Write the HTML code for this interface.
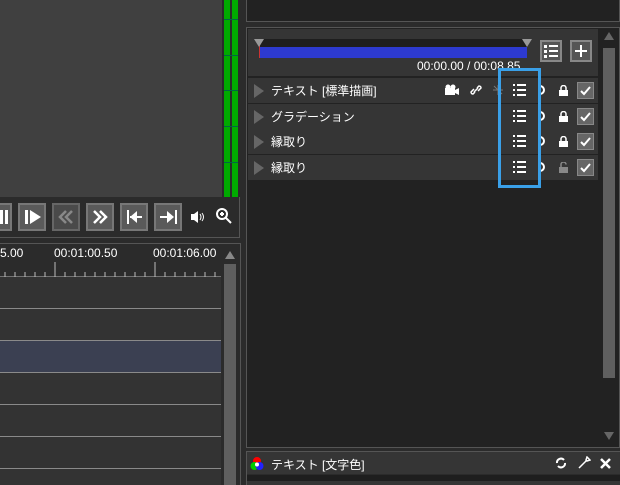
<!DOCTYPE html>
<html><head><meta charset="utf-8"><style>
*{margin:0;padding:0;box-sizing:border-box}
body{width:620px;height:485px;background:#2b2b2b;position:relative;overflow:hidden;font-family:"Liberation Sans","Noto Sans CJK JP",sans-serif;color:#fff}
.a{position:absolute}
.btn{position:absolute;top:203px;width:28px;height:28px;background:#5a5a5a;border:2px solid #777}
.row{position:absolute;left:248px;width:350px;height:25px;background:#353535}
.row .tri{position:absolute;left:6px;top:6px;width:0;height:0;border-left:10px solid #666;border-top:7px solid transparent;border-bottom:7px solid transparent}
.row .t{position:absolute;left:23px;top:4px;font-size:12px;color:#fff}
.li{position:absolute;left:265px;top:6px;width:13px;height:12px}
.chk{position:absolute;left:329px;top:4px;width:17px;height:17px;background:#666;border:1px solid #888}
.lk{position:absolute;left:311px;top:7px;width:9px;height:11px}
.tl{position:absolute;left:0;width:221px;height:1px;background:#8a8a8a}
</style></head><body>
<div class="a" style="left:0;top:0;width:222px;height:197px;background:#404040"></div>
<div class="a" style="left:222px;top:0;width:18px;height:198px;background:#2a2a2a"></div>
<div class="a" style="left:224px;top:0;width:6px;height:197px;background:#0a0"></div>
<div class="a" style="left:232px;top:0;width:6px;height:197px;background:#0a0"></div>
<div class="a" style="left:224px;top:19px;width:14px;height:1px;background:#064"></div>
<div class="a" style="left:224px;top:55px;width:14px;height:1px;background:#064"></div>
<div class="a" style="left:224px;top:90px;width:14px;height:1px;background:#064"></div>
<div class="a" style="left:224px;top:126px;width:14px;height:1px;background:#064"></div>
<div class="a" style="left:224px;top:162px;width:14px;height:1px;background:#064"></div>
<div class="a" style="left:0;top:197px;width:240px;height:41px;background:#2b2b2b;border-right:1px solid #555;border-bottom:1px solid #555"></div>
<div class="btn" style="left:-16px"><div class="a" style="left:14px;top:5px;width:3px;height:14px;background:#fff"></div><div class="a" style="left:19px;top:5px;width:3px;height:14px;background:#fff"></div></div>
<div class="btn" style="left:18px"><div class="a" style="left:5px;top:5px;width:3px;height:14px;background:#fff"></div><div class="a" style="left:10px;top:5px;border-left:11px solid #fff;border-top:7px solid transparent;border-bottom:7px solid transparent"></div></div>
<div class="btn" style="left:52px;background:#4a4a4a;border-color:#666"><svg class="a" style="left:3px;top:3px" width="18" height="18"><path d="M9 3L3 9l6 6M15 3L9 9l6 6" stroke="#888" stroke-width="2.5" fill="none"/></svg></div>
<div class="btn" style="left:86px"><svg class="a" style="left:3px;top:3px" width="18" height="18"><path d="M3 3l6 6-6 6M9 3l6 6-6 6" stroke="#fff" stroke-width="2.5" fill="none"/></svg></div>
<div class="btn" style="left:120px"><div class="a" style="left:5px;top:5px;width:2px;height:14px;background:#fff"></div><div class="a" style="left:8px;top:11px;width:12px;height:2px;background:#fff"></div><div class="a" style="left:8px;top:6px;border-right:7px solid #fff;border-top:6px solid transparent;border-bottom:6px solid transparent"></div></div>
<div class="btn" style="left:154px"><div class="a" style="left:19px;top:5px;width:2px;height:14px;background:#fff"></div><div class="a" style="left:4px;top:11px;width:12px;height:2px;background:#fff"></div><div class="a" style="left:11px;top:6px;border-left:7px solid #fff;border-top:6px solid transparent;border-bottom:6px solid transparent"></div></div>
<svg class="a" style="left:190px;top:209px" width="16" height="16"><path d="M1 5h3l4-3v12l-4-3H1z" fill="#fff"/><path d="M10 5q2 3 0 6M12 4q3 4 0 8" stroke="#fff" fill="none"/></svg>
<svg class="a" style="left:215px;top:207px" width="18" height="18"><circle cx="7" cy="7" r="5" stroke="#fff" stroke-width="2" fill="none"/><path d="M11 11l5 5M5 7h4M7 5v4" stroke="#fff" stroke-width="2"/></svg>
<div class="a" style="left:0;top:243px;width:241px;height:242px;background:#2b2b2b;border-right:1px solid #555;border-top:1px solid #555"></div>
<div class="a" style="left:0;top:246px;font-size:12px;color:#fff">5.00</div>
<div class="a" style="left:54px;top:246px;font-size:12px;color:#fff">00:01:00.50</div>
<div class="a" style="left:153px;top:246px;font-size:12px;color:#fff">00:01:06.00</div>
<svg class="a" style="left:0;top:262px" width="222" height="16"><g stroke="#bbb"><path d="M0 15h221"/><path d="M5 10v5M15 10v5M25 10v5M35 10v5M45 10v5M55 0v15M65 10v5M75 10v5M85 10v5M95 10v5M105 10v5M115 10v5M125 10v5M135 10v5M145 10v5M155 0v15M165 10v5M175 10v5M185 10v5M195 10v5M205 10v5M215 10v5"/></g></svg>
<div class="a" style="left:0;top:277px;width:221px;height:208px;background:#333"></div>
<div class="a" style="left:0;top:341px;width:221px;height:31px;background:#3b4052"></div>
<div class="tl" style="top:308px"></div><div class="tl" style="top:340px"></div><div class="tl" style="top:372px"></div><div class="tl" style="top:404px"></div><div class="tl" style="top:436px"></div><div class="tl" style="top:468px"></div>
<div class="a" style="left:224px;top:264px;width:12px;height:221px;background:#5f5f5f"></div>
<div class="a" style="left:225px;top:251px;border-bottom:8px solid #888;border-left:5px solid transparent;border-right:5px solid transparent"></div>
<div class="a" style="left:246px;top:-1px;width:374px;height:23px;background:#222;border:1px solid #555"></div>
<div class="a" style="left:246px;top:27px;width:374px;height:421px;background:#222;border:1px solid #555"></div>
<div class="a" style="left:248px;top:29px;width:350px;height:47px;background:#353535"></div>
<div class="a" style="left:259px;top:39px;width:268px;height:8px;background:#1e1e1e"></div>
<div class="a" style="left:259px;top:47px;width:268px;height:11px;background:#2d3acf"></div>
<div class="a" style="left:259px;top:44px;width:1px;height:14px;background:#c33"></div>
<div class="a" style="left:254px;top:39px;border-top:8px solid #999;border-left:5px solid transparent;border-right:5px solid transparent"></div>
<div class="a" style="left:522px;top:39px;border-top:8px solid #999;border-left:5px solid transparent;border-right:5px solid transparent"></div>
<div class="a" style="left:417px;top:59px;font-size:12px;color:#fff">00:00.00 / 00:08.85</div>
<div class="a" style="left:540px;top:40px;width:22px;height:22px;background:#555;border:2px solid #888"><svg width="18" height="18" style="position:absolute;left:0;top:0"><g fill="#fff"><rect x="2" y="3" width="3" height="3"/><rect x="7" y="3" width="9" height="2"/><rect x="2" y="8" width="3" height="3"/><rect x="7" y="8" width="9" height="2"/><rect x="2" y="13" width="3" height="3"/><rect x="7" y="13" width="9" height="2"/></g></svg></div>
<div class="a" style="left:570px;top:40px;width:22px;height:22px;background:#555;border:2px solid #888"><div class="a" style="left:3px;top:8px;width:12px;height:2px;background:#fff"></div><div class="a" style="left:8px;top:3px;width:2px;height:12px;background:#fff"></div></div>
<div class="a" style="left:603px;top:48px;width:12px;height:330px;background:#5f5f5f"></div>
<div class="a" style="left:604px;top:32px;border-bottom:8px solid #666;border-left:5px solid transparent;border-right:5px solid transparent"></div>
<div class="a" style="left:604px;top:432px;border-top:8px solid #666;border-left:5px solid transparent;border-right:5px solid transparent"></div>

<div class="row" style="top:78px"><div class="tri"></div><div class="t">テキスト [標準描画]</div>
<svg class="a" style="left:197px;top:6px" width="14" height="12"><rect x="0" y="4" width="10" height="7" fill="#fff"/><circle cx="3" cy="3" r="2.5" fill="#fff"/><circle cx="8" cy="3" r="2.5" fill="#fff"/><path d="M10 6l4-2v7l-4-2z" fill="#fff"/></svg>
<svg class="a" style="left:222px;top:6px" width="12" height="12"><path d="M5 8l-2 2a2 2 0 0 1-2-2l3-3M7 4l2-2a2 2 0 0 1 2 2l-3 3M4 8l4-4" stroke="#fff" stroke-width="1.5" fill="none"/></svg>
<svg class="a" style="left:244px;top:6px" width="12" height="12"><path d="M2 2l8 8M6 1v10M1 6h10" stroke="#777" fill="none"/></svg>
<svg class="li" viewBox="0 0 13 12"><g fill="#fff"><rect x="0" y="0" width="2" height="2"/><rect x="4" y="0" width="9" height="2"/><rect x="0" y="5" width="2" height="2"/><rect x="4" y="5" width="9" height="2"/><rect x="0" y="10" width="2" height="2"/><rect x="4" y="10" width="9" height="2"/></g></svg>
<svg class="lk" viewBox="0 0 9 11"><path d="M2 5V3a2.5 2.5 0 0 1 5 0v2" stroke="#fff" stroke-width="1.5" fill="none"/><rect x="0" y="5" width="9" height="6" fill="#fff"/></svg>
<div class="chk"><svg width="15" height="15"><path d="M3 8l3 3 6-7" stroke="#fff" stroke-width="2" fill="none"/></svg></div></div>

<div class="row" style="top:104px"><div class="tri"></div><div class="t">グラデーション</div>
<svg class="li" viewBox="0 0 13 12"><g fill="#fff"><rect x="0" y="0" width="2" height="2"/><rect x="4" y="0" width="9" height="2"/><rect x="0" y="5" width="2" height="2"/><rect x="4" y="5" width="9" height="2"/><rect x="0" y="10" width="2" height="2"/><rect x="4" y="10" width="9" height="2"/></g></svg>
<svg class="lk" viewBox="0 0 9 11"><path d="M2 5V3a2.5 2.5 0 0 1 5 0v2" stroke="#fff" stroke-width="1.5" fill="none"/><rect x="0" y="5" width="9" height="6" fill="#fff"/></svg>
<div class="chk"><svg width="15" height="15"><path d="M3 8l3 3 6-7" stroke="#fff" stroke-width="2" fill="none"/></svg></div></div>

<div class="row" style="top:129px"><div class="tri"></div><div class="t">縁取り</div>
<svg class="li" viewBox="0 0 13 12"><g fill="#fff"><rect x="0" y="0" width="2" height="2"/><rect x="4" y="0" width="9" height="2"/><rect x="0" y="5" width="2" height="2"/><rect x="4" y="5" width="9" height="2"/><rect x="0" y="10" width="2" height="2"/><rect x="4" y="10" width="9" height="2"/></g></svg>
<svg class="lk" viewBox="0 0 9 11"><path d="M2 5V3a2.5 2.5 0 0 1 5 0v2" stroke="#fff" stroke-width="1.5" fill="none"/><rect x="0" y="5" width="9" height="6" fill="#fff"/></svg>
<div class="chk"><svg width="15" height="15"><path d="M3 8l3 3 6-7" stroke="#fff" stroke-width="2" fill="none"/></svg></div></div>

<div class="row" style="top:155px"><div class="tri"></div><div class="t">縁取り</div>
<svg class="li" viewBox="0 0 13 12"><g fill="#fff"><rect x="0" y="0" width="2" height="2"/><rect x="4" y="0" width="9" height="2"/><rect x="0" y="5" width="2" height="2"/><rect x="4" y="5" width="9" height="2"/><rect x="0" y="10" width="2" height="2"/><rect x="4" y="10" width="9" height="2"/></g></svg>
<svg class="lk" viewBox="0 0 9 11"><path d="M2 5V2.5a2.5 2.5 0 0 1 5 0" stroke="#888" stroke-width="1.5" fill="none"/><rect x="0" y="5" width="9" height="6" fill="#888"/></svg>
<div class="chk"><svg width="15" height="15"><path d="M3 8l3 3 6-7" stroke="#fff" stroke-width="2" fill="none"/></svg></div></div>

<svg class="a" style="left:537px;top:84px" width="10" height="90"><g stroke="#fff" stroke-width="2" fill="none"><path d="M3 2a4 4 0 1 1 0 8"/><path d="M3 28a4 4 0 1 1 0 8"/><path d="M3 53a4 4 0 1 1 0 8"/><path d="M3 79a4 4 0 1 1 0 8"/></g></svg>
<div class="a" style="left:498px;top:68px;width:43px;height:120px;border:3px solid #3aa0e8"></div>

<div class="a" style="left:246px;top:451px;width:374px;height:34px;background:#2b2b2b;border-top:1px solid #555;border-left:1px solid #555"></div>
<div class="a" style="left:247px;top:452px;width:373px;height:22px;background:#353535"></div>
<div class="a" style="left:247px;top:475px;width:373px;height:6px;background:#1e1e1e"></div>
<div class="a" style="left:247px;top:481px;width:373px;height:4px;background:#353535"></div>
<svg class="a" style="left:250px;top:456px" width="14" height="15"><circle cx="7" cy="5" r="4" fill="#f00"/><circle cx="4.5" cy="10" r="4" fill="#0c0"/><circle cx="9.5" cy="10" r="4" fill="#22f"/><circle cx="7" cy="8.5" r="2" fill="#fff"/></svg>
<div class="a" style="left:271px;top:456px;font-size:12px;color:#fff">テキスト [文字色]</div>
<svg class="a" style="left:555px;top:457px" width="12" height="12"><path d="M2 6a4 4 0 0 1 7-3M10 6a4 4 0 0 1-7 3" stroke="#fff" stroke-width="2" fill="none"/></svg>
<svg class="a" style="left:578px;top:456px" width="13" height="13"><path d="M1 12l7-7M9 1l3 3-3 1-1-1z" stroke="#fff" stroke-width="1.5" fill="none"/></svg>
<svg class="a" style="left:600px;top:458px" width="11" height="11"><path d="M1 1l9 9M10 1l-9 9" stroke="#fff" stroke-width="2.5"/></svg>
</body></html>
